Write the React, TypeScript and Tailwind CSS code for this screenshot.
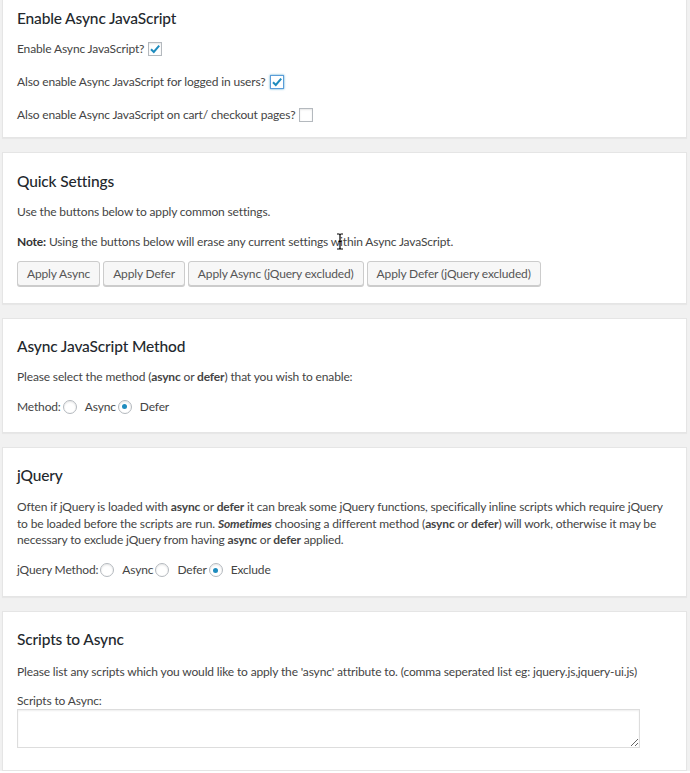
import React from "react";

const font = { fontFamily: "Lato, 'Open Sans', sans-serif" };

function Checkbox({ checked, focus }: { checked?: boolean; focus?: boolean }) {
  return (
    <span
      className={
        "inline-flex items-center justify-center w-[14px] h-[14px] ml-[4px] bg-white border " +
        (focus ? "border-[#5b9dd9] shadow-[0_0_2px_rgba(30,140,190,0.8)]" : "border-[#b4b9be] shadow-[inset_0_1px_2px_rgba(0,0,0,0.1)]")
      }
    >
      {checked && (
        <svg width="12" height="12" viewBox="0 0 12 12">
          <path d="M2 6.2 L4.8 9 L10.2 2.6" fill="none" stroke="#1e8cbe" strokeWidth="2" />
        </svg>
      )}
    </span>
  );
}

function Radio({ checked }: { checked?: boolean }) {
  return (
    <span className="inline-flex items-center justify-center w-[14px] h-[14px] rounded-full bg-white border border-[#b4b9be] shadow-[inset_0_1px_2px_rgba(0,0,0,0.1)] mx-[2px]">
      {checked && <span className="w-[5px] h-[5px] rounded-full bg-[#1e8cbe]" />}
    </span>
  );
}

function Btn({ children }: { children: React.ReactNode }) {
  return (
    <button className="h-[25px] px-[9px] bg-[#f7f7f7] border border-[#cccccc] rounded-[3px] text-[#555] shadow-[0_1px_0_#cccccc] text-[12px] tracking-[-0.15px] leading-[23px]">
      {children}
    </button>
  );
}

function Panel({ children, className }: { children: React.ReactNode; className?: string }) {
  return (
    <div className={"bg-white border border-[#e5e5e5] shadow-[0_1px_1px_rgba(0,0,0,0.04)] px-[14px] " + (className || "")}>
      {children}
    </div>
  );
}

function Title({ children }: { children: React.ReactNode }) {
  return <div className="h-[30px] flex items-center text-[15.5px] font-medium text-[#23282d]">{children}</div>;
}

export default function App() {
  return (
    <div className="min-h-[773px] bg-[#f1f1f1] pl-[2px] pr-[3px] text-[#444] text-[12px] tracking-[-0.15px]" style={font}>
      <div className="flex flex-col gap-[14px] -mt-[11px]">
        <Panel className="pt-[14px] pb-[6px]">
          <Title>Enable Async JavaScript</Title>
          <div className="-mt-[2px]">
            <div className="h-[33px] flex items-center">
              Enable Async JavaScript? <Checkbox checked />
            </div>
            <div className="h-[33px] flex items-center">
              Also enable Async JavaScript for logged in users? <Checkbox checked focus />
            </div>
            <div className="h-[33px] flex items-center">
              Also enable Async JavaScript on cart/ checkout pages? <Checkbox />
            </div>
          </div>
        </Panel>

        <Panel className="pt-[14px] pb-[17px]">
          <Title>Quick Settings</Title>
          <div className="h-[30px] flex items-center">Use the buttons below to apply common settings.</div>
          <div className="relative h-[29px] flex items-center">
            <span>
              <b className="font-bold text-[#333]">Note:</b> Using the buttons below will erase any current settings within Async JavaScript.
            </span>
            <svg className="absolute left-[319px] top-[6px]" width="8" height="17" viewBox="0 0 8 17">
              <path d="M1 1 H3 Q4 1 4 2.5 Q4 1 5 1 H7 M4 2.5 V14.5 M1 16 H3 Q4 16 4 14.5 Q4 16 5 16 H7 M2.5 8.5 H5.5" fill="none" stroke="#000" strokeWidth="1.2" />
            </svg>
          </div>
          <div className="mt-[5px] flex gap-[3px]">
            <Btn>Apply Async</Btn>
            <Btn>Apply Defer</Btn>
            <Btn>Apply Async (jQuery excluded)</Btn>
            <Btn>Apply Defer (jQuery excluded)</Btn>
          </div>
        </Panel>

        <Panel className="pt-[13px] pb-[11px]">
          <Title>Async JavaScript Method</Title>
          <div className="h-[30px] flex items-center">
            <span>
              Please select the method (<b className="font-bold">async</b> or <b className="font-bold">defer</b>) that you wish to enable:
            </span>
          </div>
          <div className="h-[29px] flex items-center">
            Method: <Radio /> <span className="ml-[6px]">Async</span> <Radio checked /> <span className="ml-[6px]">Defer</span>
          </div>
        </Panel>

        <Panel className="pt-[13px] pb-[11px]">
          <Title>jQuery</Title>
          <p className="mt-[8px] leading-[16.5px]">
            Often if jQuery is loaded with <b className="font-bold">async</b> or <b className="font-bold">defer</b> it can break some jQuery functions, specifically inline scripts which require jQuery to be loaded before the scripts are run. <b className="font-bold italic">Sometimes</b> choosing a different method (<b className="font-bold">async</b> or <b className="font-bold">defer</b>) will work, otherwise it may be necessary to exclude jQuery from having <b className="font-bold">async</b> or <b className="font-bold">defer</b> applied.
          </p>
          <div className="mt-[7px] h-[29px] flex items-center">
            jQuery Method: <Radio /> <span className="ml-[6px]">Async</span> <Radio /> <span className="ml-[6px]">Defer</span> <Radio checked /> <span className="ml-[6px]">Exclude</span>
          </div>
        </Panel>

        <Panel className="pt-[13px] pb-[22px]">
          <Title>Scripts to Async</Title>
          <div className="mt-[2px] h-[30px] flex items-center">
            Please list any scripts which you would like to apply the 'async' attribute to. (comma seperated list eg: jquery.js,jquery-ui.js)
          </div>
          <div className="mt-[6px] h-[16px] leading-[16px]">Scripts to Async:</div>
          <textarea className="block w-[623px] h-[39px] border border-[#dddddd] shadow-[inset_0_1px_2px_rgba(0,0,0,0.07)] bg-white" />
        </Panel>
      </div>
    </div>
  );
}
